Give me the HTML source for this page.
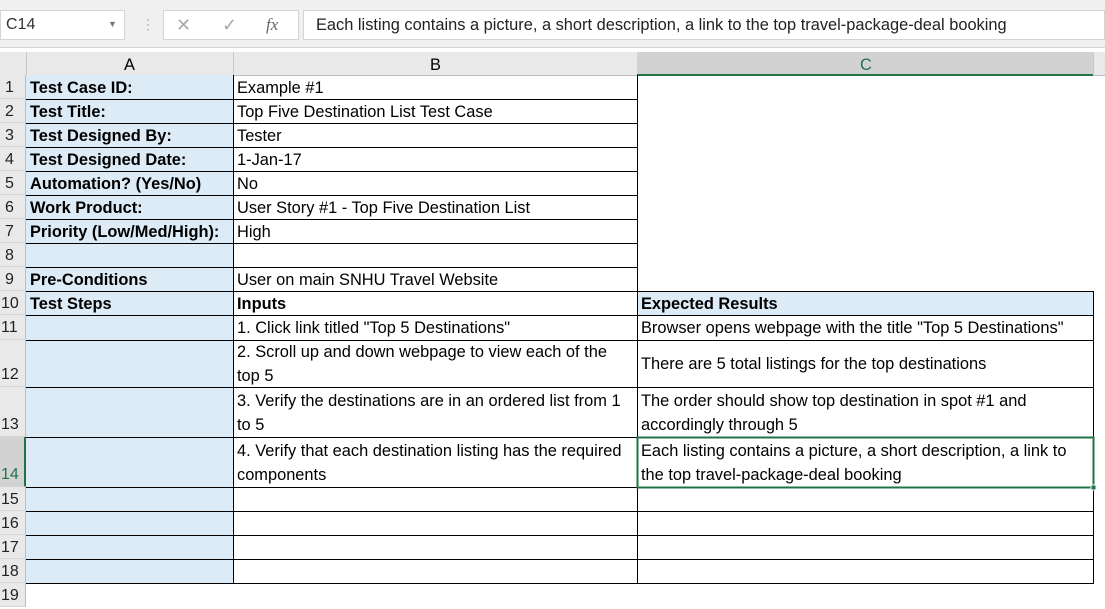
<!DOCTYPE html>
<html><head><style>
body{margin:0;width:1105px;height:601px;overflow:hidden;background:#fff;font-family:"Liberation Sans",sans-serif;position:relative}
.a{position:absolute;box-sizing:border-box}
.t{position:absolute;font-size:16.4px;color:#000;white-space:nowrap;line-height:24px}
.b{font-weight:bold}
.rh{position:absolute;left:0;width:26px;font-size:16px;line-height:26px;color:#222;padding-left:3px;box-sizing:border-box;background:#e9e9e9;border-bottom:1px solid #d4d4d4;border-right:1px solid #bdbdbd}
</style></head><body>
<div class="a" style="left:0;top:0;width:1105px;height:48px;background:#f0f0f0;border-bottom:1px solid #d4d4d4"></div>
<div class="a" style="left:0;top:10px;width:125px;height:30px;background:#fff;border:1px solid #d4d4d4"></div>
<div class="t" style="left:6px;top:13px;font-size:16px;color:#333">C14</div>
<div class="t" style="left:108px;top:12px;font-size:9px;color:#777">▼</div>
<div class="t" style="left:141px;top:12px;color:#aaa;font-size:14px">⋮</div>
<div class="a" style="left:163px;top:10px;width:136px;height:30px;background:#fff;border:1px solid #d4d4d4"></div>
<div class="t" style="left:176px;top:13px;color:#aaa;font-size:18px">✕</div>
<div class="t" style="left:222px;top:13px;color:#aaa;font-size:18px">✓</div>
<div class="t" style="left:266px;top:13px;color:#666;font-size:17px;font-style:italic;font-family:'Liberation Serif',serif">fx</div>
<div class="a" style="left:303px;top:10px;width:802px;height:30px;background:#fff;border:1px solid #d4d4d4"></div>
<div class="t" style="left:316px;top:13px;color:#222">Each listing contains a picture, a short description, a link to the top travel-package-deal booking</div>
<div class="a" style="left:0;top:52px;width:1105px;height:24px;background:#e9e9e9;border-bottom:1px solid #bdbdbd"></div>
<div class="a" style="left:26px;top:52px;width:1px;height:24px;background:#c8c8c8"></div>
<div class="a" style="left:233px;top:52px;width:1px;height:24px;background:#c8c8c8"></div>
<div class="a" style="left:637px;top:52px;width:456px;height:24px;background:#d2d2d2;border-bottom:2px solid #217346"></div>
<div class="a" style="left:1093px;top:52px;width:1px;height:24px;background:#c8c8c8"></div>
<div class="t" style="left:124px;top:53px">A</div>
<div class="t" style="left:430px;top:53px">B</div>
<div class="t" style="left:860px;top:53px;color:#217346">C</div>
<div class="a" style="left:26px;top:75px;width:207px;height:509px;background:#ddebf7"></div>
<div class="a" style="left:637px;top:291px;width:456px;height:24px;background:#ddebf7"></div>
<div class="rh" style="top:75px;height:24px;padding-left:5px">1</div>
<div class="rh" style="top:99px;height:24px;padding-left:5px">2</div>
<div class="rh" style="top:123px;height:24px;padding-left:5px">3</div>
<div class="rh" style="top:147px;height:24px;padding-left:5px">4</div>
<div class="rh" style="top:171px;height:24px;padding-left:5px">5</div>
<div class="rh" style="top:195px;height:24px;padding-left:5px">6</div>
<div class="rh" style="top:219px;height:24px;padding-left:5px">7</div>
<div class="rh" style="top:243px;height:24px;padding-left:5px">8</div>
<div class="rh" style="top:267px;height:24px;padding-left:5px">9</div>
<div class="rh" style="top:291px;height:24px;padding-left:1px">10</div>
<div class="rh" style="top:315px;height:25px;padding-left:1px">11</div>
<div class="rh" style="top:340px;height:47px;padding:22px 0 0 1px">12</div>
<div class="rh" style="top:387px;height:50px;padding:25px 0 0 1px">13</div>
<div class="rh" style="top:437px;height:50px;padding:25px 0 0 1px;background:#d2d2d2;color:#217346;border-right:2px solid #217346">14</div>
<div class="rh" style="top:487px;height:24px;padding-left:1px">15</div>
<div class="rh" style="top:511px;height:24px;padding-left:1px">16</div>
<div class="rh" style="top:535px;height:24px;padding-left:1px">17</div>
<div class="rh" style="top:559px;height:24px;padding-left:1px">18</div>
<div class="rh" style="top:583px;height:24px;padding-left:1px">19</div>
<svg class="a" style="left:0;top:0" width="1105" height="601">
<g stroke="#000" stroke-width="1" shape-rendering="crispEdges">
<line x1="26" y1="99.5" x2="637" y2="99.5"/><line x1="26" y1="123.5" x2="637" y2="123.5"/>
<line x1="26" y1="147.5" x2="637" y2="147.5"/><line x1="26" y1="171.5" x2="637" y2="171.5"/>
<line x1="26" y1="195.5" x2="637" y2="195.5"/><line x1="26" y1="219.5" x2="637" y2="219.5"/>
<line x1="26" y1="243.5" x2="637" y2="243.5"/><line x1="26" y1="267.5" x2="637" y2="267.5"/>
<line x1="26" y1="291.5" x2="1093" y2="291.5"/><line x1="26" y1="315.5" x2="1093" y2="315.5"/>
<line x1="26" y1="340.5" x2="1093" y2="340.5"/><line x1="26" y1="387.5" x2="1093" y2="387.5"/>
<line x1="26" y1="437.5" x2="1093" y2="437.5"/><line x1="26" y1="487.5" x2="1093" y2="487.5"/>
<line x1="26" y1="511.5" x2="1093" y2="511.5"/><line x1="26" y1="535.5" x2="1093" y2="535.5"/>
<line x1="26" y1="559.5" x2="1093" y2="559.5"/><line x1="26" y1="583.5" x2="1093" y2="583.5"/>
<line x1="233.5" y1="75" x2="233.5" y2="584"/><line x1="637.5" y1="75" x2="637.5" y2="584"/>
<line x1="1093.5" y1="291" x2="1093.5" y2="584"/>
</g>
<rect x="637.5" y="437.5" width="456" height="50" fill="none" stroke="#217346" stroke-width="2"/>
<rect x="1091" y="485" width="5" height="5" fill="#217346" stroke="#fff" stroke-width="1"/>
</svg>
<div class="t b" style="left:30px;top:76px">Test Case ID:</div><div class="t" style="left:237px;top:76px">Example #1</div>
<div class="t b" style="left:30px;top:100px">Test Title:</div><div class="t" style="left:237px;top:100px">Top Five Destination List Test Case</div>
<div class="t b" style="left:30px;top:124px">Test Designed By:</div><div class="t" style="left:237px;top:124px">Tester</div>
<div class="t b" style="left:30px;top:148px">Test Designed Date:</div><div class="t" style="left:237px;top:148px">1-Jan-17</div>
<div class="t b" style="left:30px;top:172px">Automation? (Yes/No)</div><div class="t" style="left:237px;top:172px">No</div>
<div class="t b" style="left:30px;top:196px">Work Product:</div><div class="t" style="left:237px;top:196px">User Story #1 - Top Five Destination List</div>
<div class="t b" style="left:30px;top:220px">Priority (Low/Med/High):</div><div class="t" style="left:237px;top:220px">High</div>
<div class="t b" style="left:30px;top:268px">Pre-Conditions</div><div class="t" style="left:237px;top:268px">User on main SNHU Travel Website</div>
<div class="t b" style="left:30px;top:292px">Test Steps</div><div class="t b" style="left:237px;top:292px">Inputs</div><div class="t b" style="left:641px;top:292px">Expected Results</div>
<div class="t" style="left:237px;top:316px">1. Click link titled "Top 5 Destinations"</div><div class="t" style="left:641px;top:316px">Browser opens webpage with the title "Top 5 Destinations"</div>
<div class="t" style="left:237px;top:340px">2. Scroll up and down webpage to view each of the</div><div class="t" style="left:237px;top:364px">top 5</div>
<div class="t" style="left:641px;top:352px">There are 5 total listings for the top destinations</div>
<div class="t" style="left:237px;top:389px">3. Verify the destinations are in an ordered list from 1</div><div class="t" style="left:237px;top:413px">to 5</div>
<div class="t" style="left:641px;top:389px">The order should show top destination in spot #1 and</div><div class="t" style="left:641px;top:413px">accordingly through 5</div>
<div class="t" style="left:237px;top:439px">4. Verify that each destination listing has the required</div><div class="t" style="left:237px;top:463px">components</div>
<div class="t" style="left:641px;top:439px">Each listing contains a picture, a short description, a link to</div><div class="t" style="left:641px;top:463px">the top travel-package-deal booking</div>
</body></html>
